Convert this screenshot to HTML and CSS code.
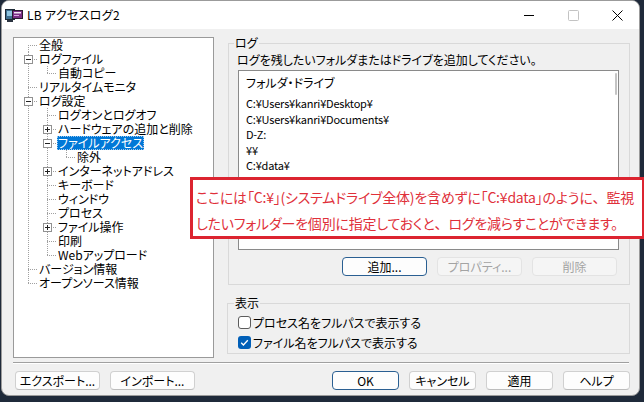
FILE: index.html
```html
<!DOCTYPE html>
<html lang="ja">
<head>
<meta charset="utf-8">
<title>LB アクセスログ2</title>
<link rel="stylesheet" href="styles.css">
</head>
<body>
<div class="window">
  <div class="titlebar">
    <svg class="appicon" width="18" height="16" viewBox="0 0 18 16">
      <rect x="0.5" y="2.5" width="9" height="10" fill="#3f6f8f" stroke="#1e2a36"/>
      <rect x="2" y="4" width="6" height="5" fill="#8fc4e0"/>
      <rect x="2" y="13" width="6" height="2" fill="#2a3340"/>
      <rect x="7.5" y="3.5" width="10" height="8" fill="#7b2d86" stroke="#2a1a30"/>
      <rect x="9" y="5" width="7" height="1.5" fill="#f2e6f4"/>
      <rect x="9" y="8" width="5" height="1" fill="#d9a6e0"/>
    </svg>
    <span class="title">LB アクセスログ2</span>
    <div class="caption">
      <span class="cap"><svg width="10" height="10" viewBox="0 0 10 10"><path d="M0 5.5H10" stroke="#000" stroke-width="1"/></svg></span>
      <span class="cap"><svg width="11" height="11" viewBox="0 0 11 11"><rect x="0.5" y="0.5" width="10" height="10" fill="none" stroke="#c3c3c3" rx="1"/></svg></span>
      <span class="cap"><svg width="11" height="11" viewBox="0 0 11 11"><path d="M0.5 0.5L10.5 10.5M10.5 0.5L0.5 10.5" stroke="#000" stroke-width="1"/></svg></span>
    </div>
  </div>

  <div class="body">
    <div class="main">
      <div class="tree">
        <div class="row"><i class="c first"></i><span class="lbl">全般</span></div>
        <div class="row"><i class="c tee"><b class="box minus"></b></i><span class="lbl">ログファイル</span></div>
        <div class="row"><i class="c v"></i><i class="c elbow"></i><span class="lbl">自動コピー</span></div>
        <div class="row"><i class="c tee"></i><span class="lbl">リアルタイムモニタ</span></div>
        <div class="row"><i class="c tee"><b class="box minus"></b></i><span class="lbl">ログ設定</span></div>
        <div class="row"><i class="c v"></i><i class="c tee"></i><span class="lbl">ログオンとログオフ</span></div>
        <div class="row"><i class="c v"></i><i class="c tee"><b class="box plus"></b></i><span class="lbl">ハードウェアの追加と削除</span></div>
        <div class="row"><i class="c v"></i><i class="c tee"><b class="box minus"></b></i><span class="lbl sel">ファイルアクセス</span></div>
        <div class="row"><i class="c v"></i><i class="c v"></i><i class="c elbow"></i><span class="lbl">除外</span></div>
        <div class="row"><i class="c v"></i><i class="c tee"><b class="box plus"></b></i><span class="lbl">インターネットアドレス</span></div>
        <div class="row"><i class="c v"></i><i class="c tee"></i><span class="lbl">キーボード</span></div>
        <div class="row"><i class="c v"></i><i class="c tee"></i><span class="lbl">ウィンドウ</span></div>
        <div class="row"><i class="c v"></i><i class="c tee"></i><span class="lbl">プロセス</span></div>
        <div class="row"><i class="c v"></i><i class="c tee"><b class="box plus"></b></i><span class="lbl">ファイル操作</span></div>
        <div class="row"><i class="c v"></i><i class="c tee"></i><span class="lbl">印刷</span></div>
        <div class="row"><i class="c v"></i><i class="c elbow"></i><span class="lbl">Webアップロード</span></div>
        <div class="row"><i class="c tee"></i><span class="lbl">バージョン情報</span></div>
        <div class="row"><i class="c elbow"></i><span class="lbl">オープンソース情報</span></div>
      </div>

      <div class="right">
        <fieldset class="group log">
          <legend>ログ</legend>
          <div class="hint">ログを残したいフォルダまたはドライブを追加してください。</div>
          <div class="list">
            <div class="list-head">フォルダ・ドライブ</div>
            <div class="item">C:¥Users¥kanri¥Desktop¥</div>
            <div class="item">C:¥Users¥kanri¥Documents¥</div>
            <div class="item">D-Z:</div>
            <div class="item">¥¥</div>
            <div class="item">C:¥data¥</div>
            <div class="thumb"></div>
          </div>
          <div class="btnrow">
            <button class="btn wide default">追加...</button>
            <button class="btn wide" disabled>プロパティ...</button>
            <button class="btn wide" disabled>削除</button>
          </div>
        </fieldset>

        <fieldset class="group disp">
          <legend>表示</legend>
          <div class="check"><span class="cb"></span>プロセス名をフルパスで表示する</div>
          <div class="check"><span class="cb on"><svg width="13" height="13" viewBox="0 0 13 13"><path d="M3.2 6.8L5.4 9L9.8 4.3" fill="none" stroke="#fff" stroke-width="1.3"/></svg></span>ファイル名をフルパスで表示する</div>
        </fieldset>
      </div>
    </div>

    <div class="sep"></div>

    <div class="footer">
      <div class="fgroup left">
        <button class="btn wide">エクスポート...</button>
        <button class="btn wide">インポート...</button>
      </div>
      <div class="fgroup">
        <button class="btn default">OK</button>
        <button class="btn">キャンセル</button>
        <button class="btn">適用</button>
        <button class="btn">ヘルプ</button>
      </div>
    </div>
  </div>

  <div class="callout">ここには「C:¥」(システムドライブ全体)を含めずに「C:¥data」のように<span class="fw">、</span>監視<br>したいフォルダーを個別に指定しておくと<span class="fw">、</span>ログを減らすことができます。</div>
</div>
</body>
</html>
```

FILE: styles.css
```css
* { box-sizing: border-box; }

html, body {
  margin: 0;
  padding: 0;
}

body {
  width: 644px;
  height: 402px;
  background: #1f2a3a;
  font: 12px "Noto Sans CJK JP", "Noto Sans", sans-serif;
  font-feature-settings: "palt";
  color: #000;
  overflow: hidden;
}

.window {
  position: relative;
  margin-left: 1px;
  width: 639px;
  height: 396px;
  border: 1px solid #9b9b9b;
  border-radius: 8px;
  background: #f0f0f0;
}

/* title bar */
.titlebar {
  display: flex;
  align-items: center;
  height: 28px;
  padding-left: 3px;
  background: #fff;
  border-radius: 7px 7px 0 0;
}

.appicon {
  flex: none;
  margin-right: 4px;
}

.title {
  font-size: 12px;
  line-height: 14px;
  letter-spacing: 0.3px;
}

.caption {
  margin-left: auto;
  display: flex;
  height: 28px;
}

.cap {
  width: 44px;
  display: flex;
  align-items: center;
  justify-content: center;
}

/* body */
.body {
  padding: 7px 9px 0 11px;
}

.main {
  display: flex;
  align-items: flex-start;
  gap: 13px;
}

/* tree */
.tree {
  flex: none;
  margin-top: 1px;
  width: 201px;
  height: 321px;
  background: #fff;
  border: 1px solid #9a9a9a;
  padding: 0 0 0 5px;
}

.row {
  display: flex;
  height: 14px;
}

.c {
  flex: none;
  display: block;
  width: 19px;
  height: 14px;
}

.v {
  background: repeating-linear-gradient(to bottom, #a0a0a0 0 1px, transparent 1px 2px) 9px 0 / 1px 14px no-repeat;
}

.tee {
  background:
    repeating-linear-gradient(to bottom, #a0a0a0 0 1px, transparent 1px 2px) 9px 0 / 1px 14px no-repeat,
    repeating-linear-gradient(to right, #a0a0a0 0 1px, transparent 1px 2px) 9px 7px / 10px 1px no-repeat;
}

.elbow {
  background:
    repeating-linear-gradient(to bottom, #a0a0a0 0 1px, transparent 1px 2px) 9px 0 / 1px 8px no-repeat,
    repeating-linear-gradient(to right, #a0a0a0 0 1px, transparent 1px 2px) 9px 7px / 10px 1px no-repeat;
}

.first {
  background:
    repeating-linear-gradient(to bottom, #a0a0a0 0 1px, transparent 1px 2px) 9px 7px / 1px 7px no-repeat,
    repeating-linear-gradient(to right, #a0a0a0 0 1px, transparent 1px 2px) 9px 7px / 10px 1px no-repeat;
}

.box {
  display: block;
  width: 9px;
  height: 9px;
  margin: 3px 0 0 5px;
  border: 1px solid #919191;
  background-color: #fff;
}

.box.minus {
  background: linear-gradient(#222, #222) center / 5px 1px no-repeat, #fff;
}

.box.plus {
  background:
    linear-gradient(#222, #222) center / 5px 1px no-repeat,
    linear-gradient(#222, #222) center / 1px 5px no-repeat,
    #fff;
}

.lbl {
  display: block;
  height: 14px;
  line-height: 14px;
  padding: 0 1px;
  white-space: nowrap;
}

.lbl.sel {
  background: #0078d7;
  color: #fff;
  outline: 1px dotted #9cc8ee;
  outline-offset: -1px;
}

/* right column */
.right {
  flex: none;
  width: 403px;
  display: flex;
  flex-direction: column;
}

.group {
  margin: 0;
  border: 1px solid #d9d9d9;
  min-width: 0;
}

.group legend {
  padding: 0 1px;
  margin-left: -4px;
  line-height: 14px;
  height: 14px;
}

.log {
  margin-left: 1px;
  padding: 2px 10px 8px 9px;
}

.hint {
  height: 16px;
  line-height: 16px;
  margin-left: -1px;
  white-space: nowrap;
}

.list {
  position: relative;
  margin-top: 2px;
  height: 180px;
  background: #fff;
  border: 1px solid #8a8a8a;
}

.list-head {
  height: 25px;
  line-height: 23px;
  padding-left: 7px;
}

.item {
  height: 15.5px;
  line-height: 15.5px;
  padding-left: 7px;
  font-size: 11px;
  font-feature-settings: normal;
  letter-spacing: -0.2px;
  white-space: nowrap;
}

.thumb {
  position: absolute;
  right: 1px;
  top: 2px;
  width: 2px;
  height: 22px;
  border-radius: 1px;
  background: #c4c4c4;
}

.btnrow {
  display: flex;
  justify-content: flex-end;
  gap: 10px;
  margin-top: 7px;
  padding-right: 2px;
}

.btn {
  flex: none;
  width: 67px;
  height: 19px;
  padding: 0;
  font: inherit;
  font-size: 12px;
  line-height: 17px;
  color: #000;
  background: #fdfdfd;
  border: 1px solid #d0d0d0;
  border-bottom-color: #bdbdbd;
  border-radius: 4px;
  white-space: nowrap;
}

.btn.wide {
  width: 85px;
}

.btn.default {
  border-color: #2a5f92;
}

.btn:disabled {
  background: #f5f5f5;
  border-color: #e3e3e3;
  color: #a3a3a3;
}

.disp {
  margin-top: 11px;
  padding: 2px 9px 1px 10px;
}

.check {
  display: flex;
  align-items: center;
  height: 20px;
  white-space: nowrap;
}

.cb {
  flex: none;
  width: 13px;
  height: 13px;
  margin-right: 2px;
  border: 1px solid #5c5c5c;
  border-radius: 3px;
  background: #fff;
}

.cb.on {
  border: none;
  background: #005fb8;
}

.cb svg {
  display: block;
}

/* footer */
.sep {
  margin-top: 4px;
  width: 616px;
  height: 2px;
  border-top: 1px solid #a0a0a0;
  border-bottom: 1px solid #fff;
}

.footer {
  display: flex;
  justify-content: space-between;
  margin-top: 7px;
}

.fgroup {
  display: flex;
  gap: 10px;
}

.fgroup.left {
  padding-left: 2px;
}

/* annotation */
.callout {
  position: absolute;
  left: 188px;
  top: 176px;
  width: 455px;
  height: 62px;
  padding: 4px 0 0 3px;
  background: #fff;
  border: 3px solid #dc2430;
  color: #e0303a;
  font-size: 14px;
  line-height: 26px;
  letter-spacing: -0.2px;
  white-space: nowrap;
  overflow: hidden;
}

.callout .fw {
  font-feature-settings: normal;
}
```
